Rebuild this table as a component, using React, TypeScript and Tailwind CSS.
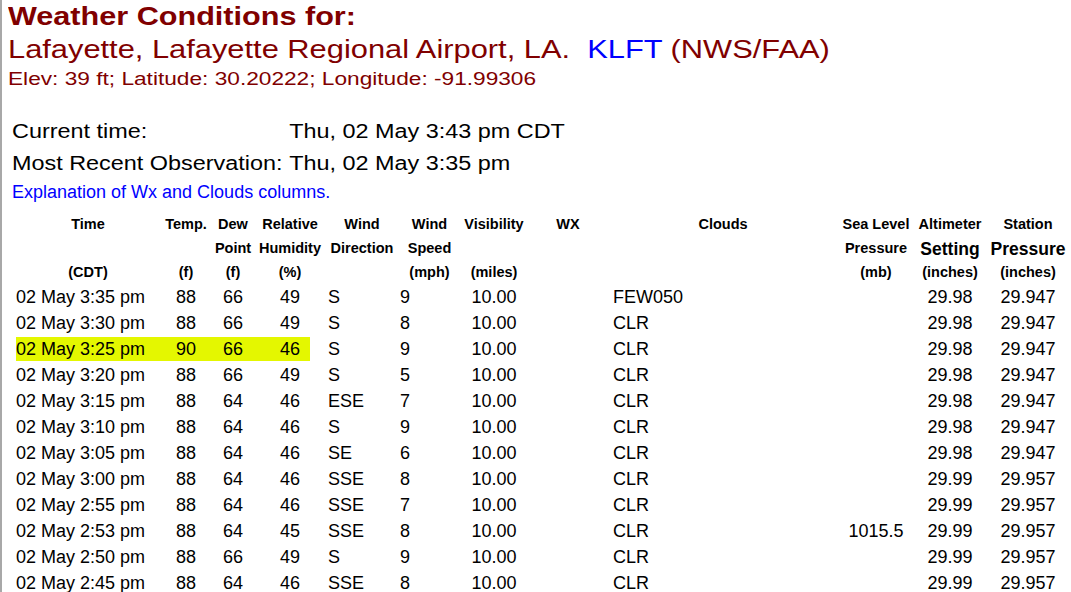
const rows = [
  ["02 May 3:35 pm", "88", "66", "49", "S", "9", "10.00", "", "FEW050", "", "29.98", "29.947"],
  ["02 May 3:30 pm", "88", "66", "49", "S", "8", "10.00", "", "CLR", "", "29.98", "29.947"],
  ["02 May 3:25 pm", "90", "66", "46", "S", "9", "10.00", "", "CLR", "", "29.98", "29.947"],
  ["02 May 3:20 pm", "88", "66", "49", "S", "5", "10.00", "", "CLR", "", "29.98", "29.947"],
  ["02 May 3:15 pm", "88", "64", "46", "ESE", "7", "10.00", "", "CLR", "", "29.98", "29.947"],
  ["02 May 3:10 pm", "88", "64", "46", "S", "9", "10.00", "", "CLR", "", "29.98", "29.947"],
  ["02 May 3:05 pm", "88", "64", "46", "SE", "6", "10.00", "", "CLR", "", "29.98", "29.947"],
  ["02 May 3:00 pm", "88", "64", "46", "SSE", "8", "10.00", "", "CLR", "", "29.99", "29.957"],
  ["02 May 2:55 pm", "88", "64", "46", "SSE", "7", "10.00", "", "CLR", "", "29.99", "29.957"],
  ["02 May 2:53 pm", "88", "64", "45", "SSE", "8", "10.00", "", "CLR", "1015.5", "29.99", "29.957"],
  ["02 May 2:50 pm", "88", "66", "49", "S", "9", "10.00", "", "CLR", "", "29.99", "29.957"],
  ["02 May 2:45 pm", "88", "64", "46", "SSE", "8", "10.00", "", "CLR", "", "29.99", "29.957"],
];

// header cells (centered), one class per column
const headCls = [
  "w-[144px]",
  "w-[52px]",
  "w-[42px]",
  "w-[56px] pl-[16px]",
  "w-[88px] pl-[16px]",
  "w-[63px]",
  "w-[66px]",
  "w-[82px]",
  "w-[228px]",
  "w-[78px]",
  "w-[70px]",
  "w-[86px]",
];

// value cells
const valCls = [
  "w-[144px]",
  "w-[52px] text-center",
  "w-[42px] text-center",
  "w-[56px] pl-[16px] text-center",
  "w-[88px] pl-[18px]",
  "w-[63px] pl-[2px]",
  "w-[66px] text-center",
  "w-[82px]",
  "w-[228px] pl-[4px]",
  "w-[78px] text-center",
  "w-[70px] text-center",
  "w-[86px] text-center",
];

const head1 = ["Time", "Temp.", "Dew", "Relative", "Wind", "Wind", "Visibility", "WX", "Clouds", "Sea Level", "Altimeter", "Station"];
const head2 = ["", "", "Point", "Humidity", "Direction", "Speed", "", "", "", "Pressure", "Setting", "Pressure"];
const head3 = ["(CDT)", "(f)", "(f)", "(%)", "", "(mph)", "(miles)", "", "", "(mb)", "(inches)", "(inches)"];

function HeadRow({ cells, h, big }: { cells: string[]; h: string; big?: boolean }) {
  return (
    <div className={`flex ${h}`}>
      {cells.map((c, i) => (
        <div
          key={i}
          className={`${headCls[i]} shrink-0 flex justify-center items-center whitespace-nowrap font-bold ${
            big && i >= 10 ? "text-[17.5px]" : "text-[14.5px]"
          }`}
        >
          {c}
        </div>
      ))}
    </div>
  );
}

export default function App() {
  return (
    <div className="min-h-screen bg-white border-l-2 border-[#a8a8a8] overflow-hidden font-['Liberation_Sans',Arial,sans-serif]">
      {/* station heading (wide face) */}
      <div className="pl-[6px] pt-[1px] text-[#800000] whitespace-nowrap">
        <div className="text-[25.5px] leading-[30px] font-bold origin-left scale-x-[1.2]">Weather Conditions for:</div>
        <div className="text-[25.7px] leading-[36px] origin-left scale-x-[1.2]">
          Lafayette, Lafayette Regional Airport, LA.&nbsp;&nbsp;<span className="text-[#0000ff]">KLFT</span> (NWS/FAA)
        </div>
        <div className="text-[18.9px] leading-[24px] origin-left scale-x-[1.2]">
          Elev: 39 ft; Latitude: 30.20222; Longitude: -91.99306
        </div>
      </div>

      {/* times */}
      <div className="pl-[10px] mt-[25px] whitespace-nowrap">
        <div className="text-[19.5px] text-black origin-left scale-x-[1.2]">
          <div className="flex h-[32px] items-center">
            <div className="w-[231px] shrink-0">Current time:</div>
            <div>Thu, 02 May 3:43 pm CDT</div>
          </div>
          <div className="flex h-[32px] items-center">
            <div className="w-[231px] shrink-0">Most Recent Observation:</div>
            <div>Thu, 02 May 3:35 pm</div>
          </div>
        </div>
        <div className="h-[24px] leading-[24px] text-[18px] text-[#0000ff]">
          Explanation of Wx and Clouds columns.
        </div>
      </div>

      {/* observation table */}
      <div className="ml-[14px] mt-[9px] text-black">
        <HeadRow cells={head1} h="h-[24px]" />
        <HeadRow cells={head2} h="h-[24px]" big />
        <HeadRow cells={head3} h="h-[23px]" />
        {rows.map((r, ri) => (
          <div key={ri} className="flex h-[26px] items-center text-[18px]">
            {r.map((v, ci) => (
              <div
                key={ci}
                className={`${valCls[ci]} shrink-0 whitespace-nowrap h-[24px] leading-[24px] ${
                  ri === 2 && ci < 4 ? "bg-[#e4f700]" : ""
                }`}
              >
                {v}
              </div>
            ))}
          </div>
        ))}
      </div>
    </div>
  );
}
